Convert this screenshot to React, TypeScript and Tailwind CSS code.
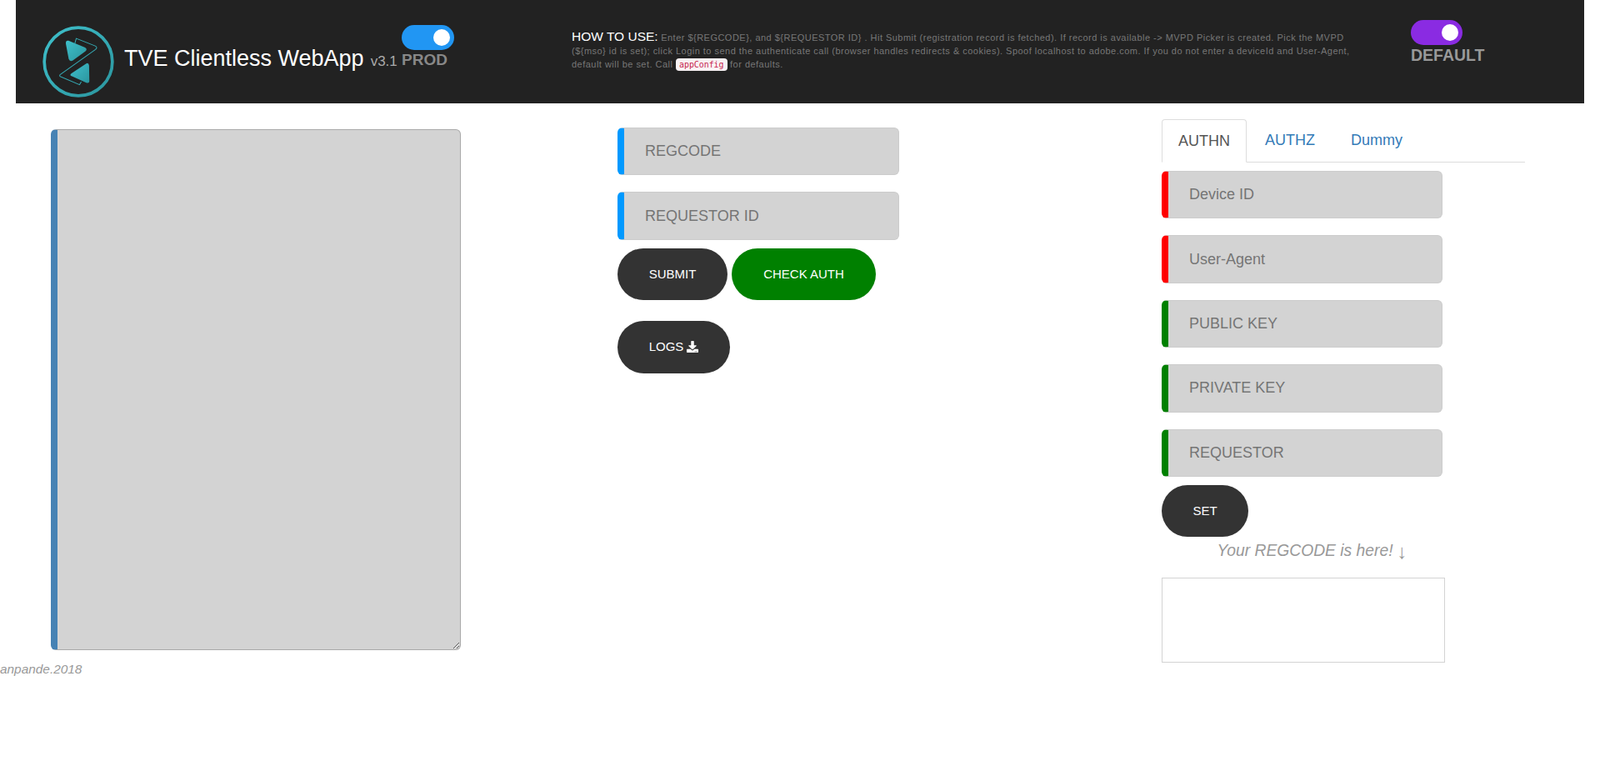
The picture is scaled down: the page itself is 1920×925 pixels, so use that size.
import { FaDownload } from "react-icons/fa";

const fontStack = { fontFamily: '"Liberation Sans", Arial, sans-serif' };

type FieldProps = {
  placeholder: string;
  accent: string;
};

function Field({ placeholder, accent }: FieldProps) {
  return (
    <input
      type="text"
      placeholder={placeholder}
      className={`mb-[20px] box-border block h-[57.4px] rounded-[6px] border border-l-[8px] border-[#cccccc] bg-[#d3d3d3] pl-[25px] text-[18px] text-[#555555] outline-none placeholder:text-[#757575] ${accent}`}
    />
  );
}

function PillButton({ children, className }: { children: React.ReactNode; className: string }) {
  return (
    <button
      type="button"
      className={`rounded-full text-center text-[15px] text-white ${className}`}
    >
      {children}
    </button>
  );
}

function Toggle({ color }: { color: string }) {
  return (
    <div className={`flex h-[30px] items-center justify-end rounded-full pr-[5px] ${color}`}>
      <span className="h-[20px] w-[20px] rounded-full bg-white" />
    </div>
  );
}

function Logo() {
  return (
    <svg viewBox="33 33 257 257" className="h-[86px] w-[86px] shrink-0">
      <defs>
        <linearGradient id="teal" x1="0" y1="0" x2="1" y2="1">
          <stop offset="0" stopColor="#3fc0cb" />
          <stop offset="1" stopColor="#2b959e" />
        </linearGradient>
      </defs>
      <circle cx="161.5" cy="161.5" r="122" fill="none" stroke="url(#teal)" strokeWidth="11" />
      <path
        d="M126 86 L184 110 Q196 116 187 124 L142 157 Q131 163 127 152 L117 98 Q115 84 126 86 Z"
        fill="url(#teal)"
      />
      <path
        d="M190 168 L137 203 Q128 210 139 214 L190 237 Q202 241 201 228 L200 175 Q198 163 190 168 Z"
        fill="url(#teal)"
      />
      <path
        d="M149 96 L154 78 L222 105 Q232 110 223 118 L96 208 Q92 214 100 216 L166 244 L172 233"
        fill="none"
        stroke="#35aab4"
        strokeWidth="3"
      />
    </svg>
  );
}

export default function App() {
  return (
    <div className="min-h-[925px] bg-white" style={fontStack}>
      <header className="mx-[19px] flex h-[124px] bg-[#222222]">
        <div className="flex w-[667px] shrink-0 pl-[32px] pt-[31px]">
          <Logo />
          <div className="ml-[12px] mt-[24px] w-[327px] whitespace-nowrap text-[27px] leading-[30px] text-white">
            TVE Clientless WebApp
            <span className="ml-[8px] text-[17px] text-[#aaaaaa]">v3.1</span>
          </div>
          <div className="ml-[6px] mt-[-1px] w-[63px]">
            <Toggle color="bg-[#2196f3]" />
            <div className="text-[19px] font-bold leading-[24px] text-[#888888]">PROD</div>
          </div>
        </div>
        <p className="mt-[36px] w-[945px] shrink-0 text-[11px] leading-[16px] tracking-[0.48px] text-[#777777]">
          <span className="text-[15.5px] tracking-normal text-white">HOW TO USE:</span> Enter ${"{REGCODE}"}, and ${"{REQUESTOR ID}"} . Hit Submit (registration record is fetched). If record is available -&gt; MVPD Picker is created. Pick the MVPD (${"{mso}"} id is set); click Login to send the authenticate call (browser handles redirects &amp; cookies). Spoof localhost to adobe.com. If you do not enter a deviceId and User-Agent, default will be set. Call{" "}
          <code className="rounded-[4px] bg-[#f9f2f4] px-[4px] py-[2px] text-[9.9px] tracking-normal text-[#c7254e]" style={{ fontFamily: '"DejaVu Sans Mono", monospace' }}>
            appConfig
          </code>{" "}
          for defaults.
        </p>
        <div className="ml-[62px] mt-[24px] w-[62px]">
          <Toggle color="bg-[#8a2be2]" />
          <div className="whitespace-nowrap text-[19.5px] font-bold leading-[24px] text-[#999999]">DEFAULT</div>
        </div>
      </header>

      <main className="grid grid-cols-[741px_653px_1fr]">
        <section className="pt-[31px]">
          <textarea className="ml-[61px] box-border block h-[625px] w-[492px] rounded-[6px] border border-l-[8px] border-[#a9a9a9] border-l-[#4682b4] bg-[#d3d3d3] outline-none" />
          <div className="mt-[13px] text-[15.4px] italic leading-[20px] text-[#999999]">anpande.2018</div>
        </section>

        <section className="pt-[29px]">
          <div className="w-[338px]">
            <Field placeholder="REGCODE" accent="w-full border-l-[#0099ff]" />
            <Field placeholder="REQUESTOR ID" accent="w-full border-l-[#0099ff]" />
          </div>
          <div className="mt-[-10px] flex gap-[5px]">
            <PillButton className="h-[62px] w-[132px] bg-[#333333]">SUBMIT</PillButton>
            <PillButton className="h-[62px] w-[173px] bg-[#008000]">CHECK AUTH</PillButton>
          </div>
          <PillButton className="mt-[25px] inline-flex h-[63px] w-[135px] items-center justify-center gap-[4px] bg-[#333333]">
            LOGS <FaDownload className="text-[14px]" />
          </PillButton>
        </section>

        <section className="pt-[19px]">
          <nav className="flex w-[436px] gap-[2px] border-b border-[#dddddd] text-[18px] leading-[26px]">
            <span className="mb-[-1px] rounded-t-[4px] border border-[#dddddd] border-b-white bg-white px-[19px] py-[12px] text-[#555555]">AUTHN</span>
            <span className="px-[20px] py-[12px] text-[#337ab7]">AUTHZ</span>
            <span className="ml-[1px] px-[20px] py-[12px] text-[#337ab7]">Dummy</span>
          </nav>
          <div className="mt-[10px] w-[337px]">
            <Field placeholder="Device ID" accent="w-full border-l-[#ff0000]" />
            <Field placeholder="User-Agent" accent="w-full border-l-[#ff0000]" />
            <Field placeholder="PUBLIC KEY" accent="w-full border-l-[#008000]" />
            <Field placeholder="PRIVATE KEY" accent="w-full border-l-[#008000]" />
            <Field placeholder="REQUESTOR" accent="w-full border-l-[#008000]" />
          </div>
          <PillButton className="mt-[-10px] block h-[62px] w-[104px] bg-[#333333]">SET</PillButton>
          <div className="mt-[4px] flex h-[28px] w-[340px] items-center justify-center gap-[5px] pl-[21px] text-[19.3px] italic text-[#999999]">
            Your REGCODE is here!
            <span className="text-[24px] not-italic leading-none">↓</span>
          </div>
          <div className="mt-[17px] h-[102px] w-[340px] border border-[#d3d3d3]" />
        </section>
      </main>
    </div>
  );
}
